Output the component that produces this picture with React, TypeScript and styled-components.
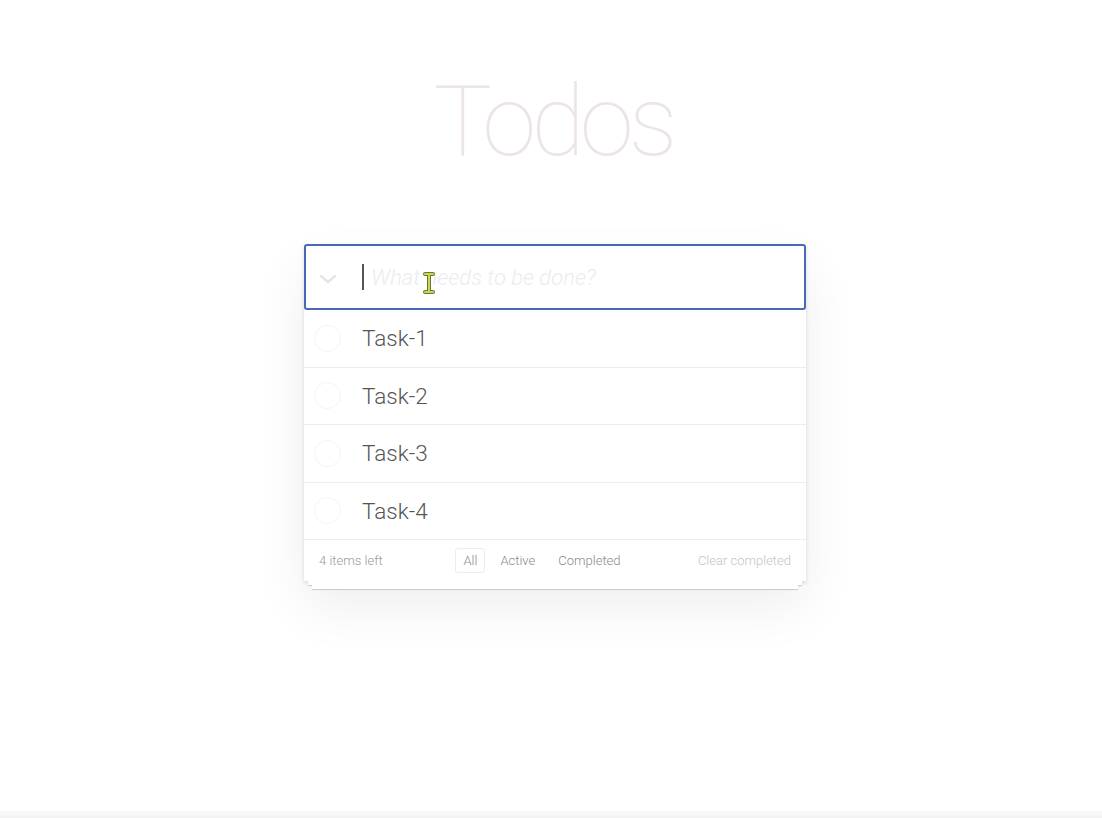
import React from "react";
import styled, { createGlobalStyle } from "styled-components";

const Global = createGlobalStyle`
  html, body { margin: 0; padding: 0; background: #ffffff; }
  body { font-family: Roboto, "Liberation Sans", Arial, sans-serif; color: #4d4d4d; }
`;

const Page = styled.div`
  min-height: 100vh;
  display: flex;
  flex-direction: column;
  box-sizing: border-box;
`;

const Main = styled.main`
  flex: 1;
  display: flex;
  flex-direction: column;
  align-items: center;
  padding-left: 8px;
`;

const Title = styled.h1`
  margin: 64px 0 0;
  height: 180px;
  font-family: Roboto, "Liberation Sans", sans-serif;
  font-weight: 100;
  font-size: 98px;
  line-height: 116px;
  color: #ece4e6;
  letter-spacing: -5px;
  padding-right: 4px;
`;

const Card = styled.section`
  position: relative;
  width: 502px;
  background: #fff;
  box-shadow: 0 2px 4px rgba(0, 0, 0, 0.12), 0 25px 50px rgba(0, 0, 0, 0.07);
`;

const Header = styled.div`
  position: relative;
  height: 66px;
  box-sizing: border-box;
  border: 2px solid #4a68b8;
  border-radius: 3px;
  display: flex;
  align-items: center;
  background: #fff;
`;

const Toggle = styled.div`
  width: 44px;
  display: flex;
  justify-content: center;
  padding-top: 4px;
  padding-right: 12px;
`;

const InputArea = styled.div`
  display: flex;
  align-items: center;
  flex: 1;
  height: 100%;
`;

const Caret = styled.span`
  width: 2px;
  height: 26px;
  background: #555;
  margin-right: 7px;
`;

const Placeholder = styled.span`
  font-family: Roboto, "Liberation Sans", sans-serif;
  font-style: italic;
  font-weight: 300;
  font-size: 22px;
  color: #ececec;
`;

const Cursor = styled.svg`
  position: absolute;
  left: 117px;
  top: 26px;
`;

const List = styled.ul`
  list-style: none;
  margin: 0;
  padding: 0;
`;

const Row = styled.li`
  height: 57.5px;
  box-sizing: border-box;
  border-bottom: 1px solid #ededed;
  display: flex;
  align-items: center;
`;

const Check = styled.span`
  width: 27px;
  height: 27px;
  border-radius: 50%;
  border: 1px solid #f4f4f4;
  margin-left: 10px;
  margin-right: 21px;
  box-sizing: border-box;
`;

const Label = styled.span`
  font-family: Roboto, "Liberation Sans", sans-serif;
  font-weight: 300;
  font-size: 22.5px;
  color: #555;
`;

const Footer = styled.footer`
  position: relative;
  height: 41px;
  box-sizing: border-box;
  padding: 0 15px;
  display: grid;
  grid-template-columns: 1fr auto 1fr;
  align-items: center;
  font-family: Roboto, "Liberation Sans", sans-serif;
  font-size: 13px;
  font-weight: 300;
  color: #999;
  z-index: 2;
  background: #fff;
`;

const Filters = styled.div`
  display: flex;
  gap: 7px;
  margin-right: 26px;
`;

const Filter = styled.a<{ $selected?: boolean }>`
  padding: 4px 7px;
  border: 1px solid ${(p) => (p.$selected ? "#ececec" : "transparent")};
  border-radius: 3px;
  color: #8a8a8a;
`;

const Clear = styled.span`
  justify-self: end;
  color: #c4c4c4;
`;

const Sheet = styled.div<{ $inset: number }>`
  height: 4px;
  margin: 0 ${(p) => p.$inset}px;
  background: #fff;
  box-shadow: 0 1px 1px rgba(0, 0, 0, 0.18);
  position: relative;
`;

const Stack = styled.div`
  position: absolute;
  left: 0;
  right: 0;
  top: 100%;
  display: flex;
  flex-direction: column;
`;

const BottomStrip = styled.div`
  height: 6px;
  background: linear-gradient(#fafafa, #f2f2f2);
  border-top: 1px solid #f6f6f6;
`;

const tasks = ["Task-1", "Task-2", "Task-3", "Task-4"];

export default function App() {
  return (
    <Page>
      <Global />
      <Main>
        <Title>Todos</Title>
        <Card>
          <Header>
            <Toggle>
              <svg width="18" height="10" viewBox="0 0 18 10">
                <path d="M2 2 L9 8 L16 2" fill="none" stroke="#e6e6e6" strokeWidth="2.5" strokeLinecap="round" />
              </svg>
            </Toggle>
            <InputArea>
              <Caret />
              <Placeholder>What needs to be done?</Placeholder>
            </InputArea>
            <Cursor width="12" height="22" viewBox="0 0 12 22">
              <path d="M2 2 H10 M6 2 V20 M2 20 H10" stroke="#6b7a2a" strokeWidth="4" strokeLinecap="round" fill="none" />
              <path d="M2 2 H10 M6 2 V20 M2 20 H10" stroke="#c8d45a" strokeWidth="2" strokeLinecap="round" fill="none" />
            </Cursor>
          </Header>
          <List>
            {tasks.map((t) => (
              <Row key={t}>
                <Check />
                <Label>{t}</Label>
              </Row>
            ))}
          </List>
          <Footer>
            <span>4 items left</span>
            <Filters>
              <Filter $selected>All</Filter>
              <Filter>Active</Filter>
              <Filter>Completed</Filter>
            </Filters>
            <Clear>Clear completed</Clear>
          </Footer>
          <Stack>
            <Sheet $inset={4} />
            <Sheet $inset={8} />
          </Stack>
        </Card>
      </Main>
      <BottomStrip />
    </Page>
  );
}
